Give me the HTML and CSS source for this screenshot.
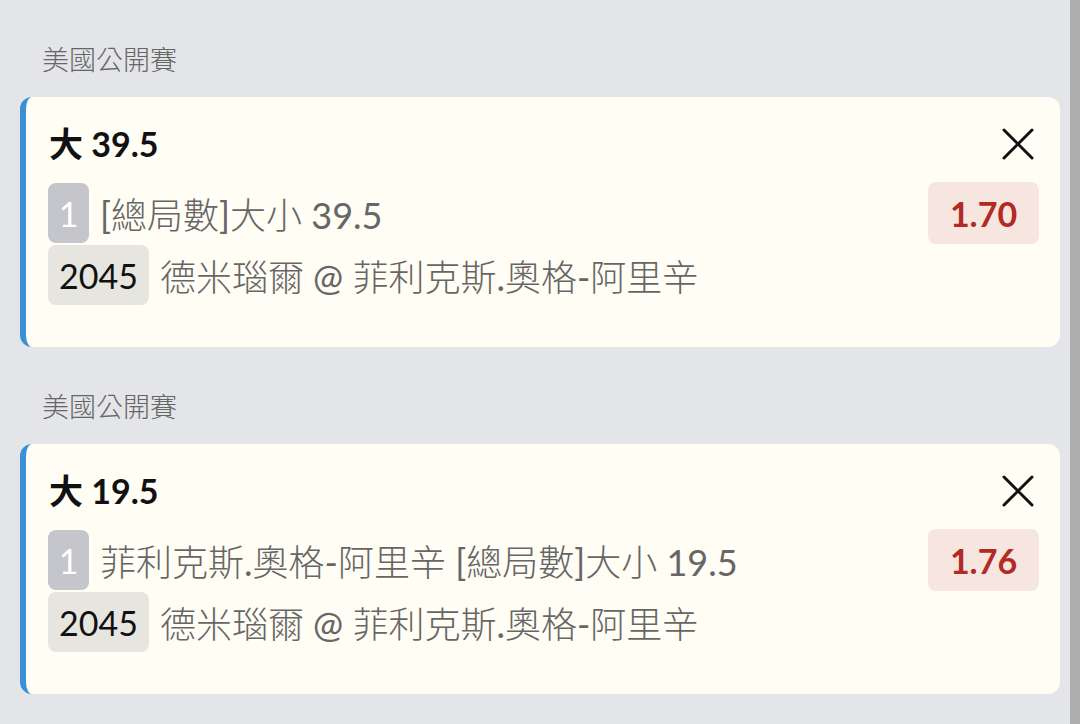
FILE: index.html
```html
<!DOCTYPE html>
<html lang="zh-Hant">
<head>
<meta charset="utf-8">
<link rel="stylesheet" href="styles.css">
</head>
<body>
<div class="page">
  <main class="list">
    <section class="group">
      <div class="league">美國公開賽</div>
      <div class="card">
        <div class="card-head">
          <div class="title">大 39.5</div>
          <svg class="close" width="34" height="34" viewBox="0 0 34 34"><path d="M3 3 L31 31 M31 3 L3 31" stroke="#111" stroke-width="3" stroke-linecap="round" fill="none"/></svg>
        </div>
        <div class="row">
          <div class="row-main">
            <span class="num">1</span>
            <span class="desc"><span class="lat">[</span>總局數<span class="lat">]</span>大小<span class="lat"> 39.5</span></span>
          </div>
          <span class="odds">1.70</span>
        </div>
        <div class="row">
          <div class="row-main">
            <span class="code">2045</span>
            <span class="desc">德米瑙爾<span class="lat"> @ </span>菲利克斯<span class="lat">.</span>奧格<span class="lat">-</span>阿里辛</span>
          </div>
        </div>
      </div>
    </section>
    <section class="group">
      <div class="league">美國公開賽</div>
      <div class="card">
        <div class="card-head">
          <div class="title">大 19.5</div>
          <svg class="close" width="34" height="34" viewBox="0 0 34 34"><path d="M3 3 L31 31 M31 3 L3 31" stroke="#111" stroke-width="3" stroke-linecap="round" fill="none"/></svg>
        </div>
        <div class="row">
          <div class="row-main">
            <span class="num">1</span>
            <span class="desc">菲利克斯<span class="lat">.</span>奧格<span class="lat">-</span>阿里辛<span class="lat"> [</span>總局數<span class="lat">]</span>大小<span class="lat"> 19.5</span></span>
          </div>
          <span class="odds">1.76</span>
        </div>
        <div class="row">
          <div class="row-main">
            <span class="code">2045</span>
            <span class="desc">德米瑙爾<span class="lat"> @ </span>菲利克斯<span class="lat">.</span>奧格<span class="lat">-</span>阿里辛</span>
          </div>
        </div>
      </div>
    </section>
  </main>
  <div class="scrollbar"></div>
</div>
</body>
</html>
```
FILE: styles.css
```css
* { box-sizing: border-box; }
html, body {
  margin: 0;
  padding: 0;
  height: 100%;
}
body {
  background: #e4e5e8;
  font-family: Lato, "Noto Sans CJK TC", sans-serif;
  overflow: hidden;
}
.page {
  display: flex;
  height: 724px;
}
.list {
  flex: 1;
  padding: 0 10px 0 20px;
}
.scrollbar {
  width: 10px;
  background: #adadad;
}
.group {
  padding-top: 46px;
}
.league {
  font-size: 27px;
  line-height: 27px;
  font-weight: 300;
  color: #666;
  padding-left: 22px;
  margin-bottom: 24px;
}
.card {
  background: #fffdf4;
  border-left: 6px solid #3a8fd5;
  border-radius: 12px;
  padding: 22px 21px 42px 22px;
  height: 250px;
}
.card-head {
  display: flex;
  justify-content: space-between;
  align-items: center;
  height: 50px;
  margin-bottom: 13px;
}
.title {
  font-size: 34px;
  font-weight: 700;
  color: #111;
  line-height: 1;
  padding-left: 1px;
}
.close {
  margin-right: 4px;
  display: block;
}
.row {
  display: flex;
  align-items: center;
  justify-content: space-between;
  height: 62px;
}
.row + .row {
  margin-top: 1px;
  height: 60px;
}
.row-main {
  display: flex;
  align-items: center;
  gap: 11px;
}
.num {
  width: 41px;
  height: 60px;
  background: #c5c5cc;
  color: #fff;
  border-radius: 8px;
  font-size: 34px;
  display: flex;
  align-items: center;
  justify-content: center;
}
.code {
  height: 60px;
  padding: 0 11px;
  background: #e7e5df;
  color: #111;
  border-radius: 8px;
  font-size: 34px;
  display: flex;
  align-items: center;
}
.desc {
  font-size: 36px;
  font-weight: 300;
  color: #666;
  white-space: nowrap;
}
.lat {
  font-weight: 400;
}
.odds {
  width: 111px;
  height: 62px;
  background: #f7e6e0;
  color: #b22a24;
  border-radius: 8px;
  font-size: 34px;
  font-weight: 700;
  display: flex;
  align-items: center;
  justify-content: center;
}
```
